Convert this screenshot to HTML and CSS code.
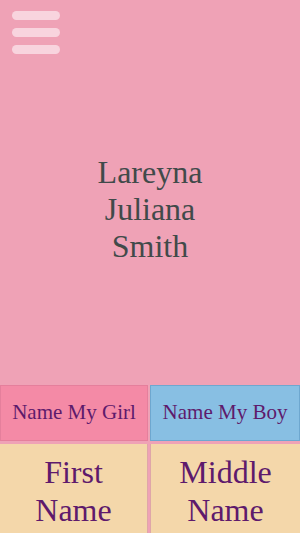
FILE: index.html
```html
<!DOCTYPE html>
<html lang="en">
<head>
    <meta charset="UTF-8">
    <title>Name My Baby</title>
    <link rel="stylesheet" href="styles.css">
</head>
<body>
    <div class="app">
        <!-- top area with menu and current name -->
        <section class="hero">
            <button class="menu-btn" aria-label="menu">
                <span></span><span></span><span></span>
            </button>
            <div class="full-name">Lareyna<br>Juliana<br>Smith</div>
        </section>
        <!-- girl / boy switch -->
        <div class="gender-row">
            <button class="gender-btn girl">Name My Girl</button>
            <button class="gender-btn boy">Name My Boy</button>
        </div>
        <!-- name parts -->
        <div class="part-row">
            <div class="part-cell">First<br>Name</div>
            <div class="part-cell">Middle<br>Name</div>
        </div>
    </div>
</body>
</html>
```

FILE: styles.css
```css
html, body {
    margin: 0; padding: 0; height: 100%;
    font-family: 'Liberation Serif', 'Times New Roman', serif;
    background: #efa2b6; overflow: hidden;
}
.app {
    display: flex; flex-direction: column;
    height: 100vh;
}
.hero {
    height: 385px; flex: none;
    position: relative;
    display: flex; align-items: center; justify-content: center;
}
.menu-btn {
    position: absolute; top: 11px; left: 12px;
    width: 48px; padding: 0; border: 0; background: none;
    display: flex; flex-direction: column; gap: 8px;
    cursor: pointer;
}
.menu-btn span {
    display: block; height: 9px; border-radius: 5px;
    background: #f8d4de;
}
.full-name {
    margin-top: 34px;
    font-size: 32px; line-height: 37px;
    color: #414a4a; text-align: center;
}
.gender-row {
    display: grid; grid-template-columns: 148px 1fr; gap: 2px;
    height: 56px; flex: none;
}
.gender-btn {
    font-family: inherit; font-size: 21px;
    color: #5e1a6c;
    border: 1px solid; padding: 0 0 2px;
    cursor: pointer;
}
.gender-btn.girl { background: #f48aa6; border-color: #e57f9c; }
.gender-btn.boy { background: #88bfe3; border-color: #6ea7cf; }
.part-row {
    display: grid; grid-template-columns: 148px 1fr; gap: 2px;
    margin-top: 3px; flex: 1;
}
.part-cell {
    background: #f4d7aa;
    border: 1px solid #dfa6a9; border-top: 0; border-bottom: 0;
    font-size: 32px; line-height: 38px;
    color: #5e1a6c; text-align: center;
    padding-top: 9px;
}
.part-cell:first-child { border-left: 0; }
.part-cell:last-child { border-right: 0; }
```
